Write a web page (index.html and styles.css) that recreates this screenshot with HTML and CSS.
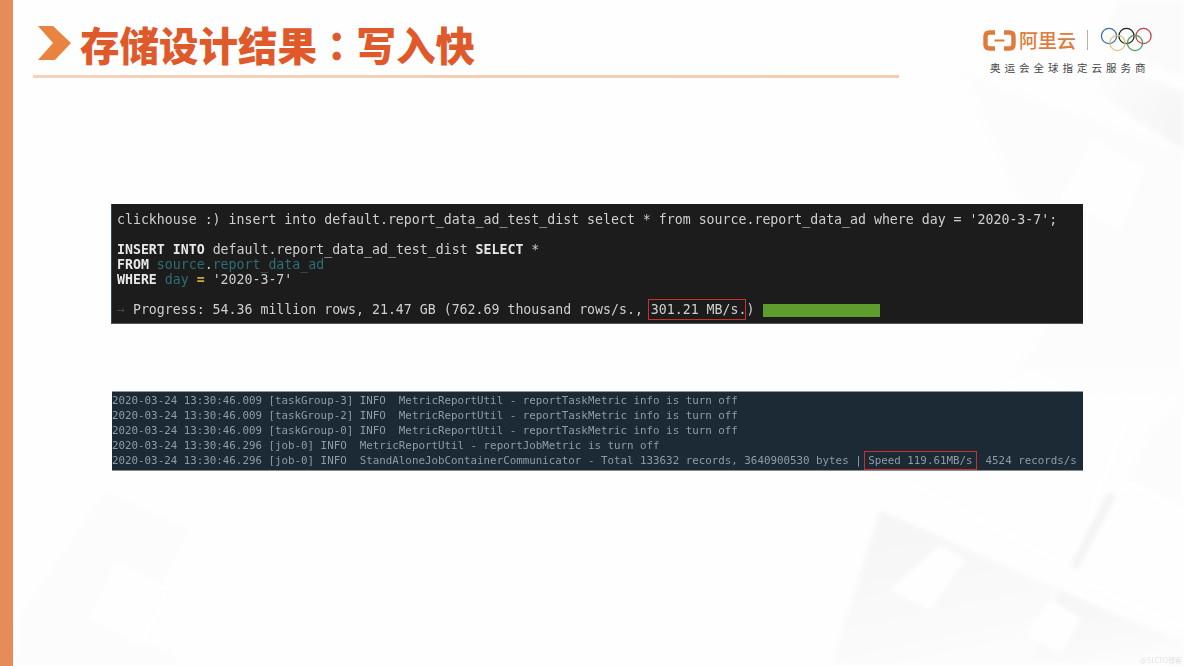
FILE: index.html
```html
<!DOCTYPE html>
<html lang="zh-CN">
<head>
<meta charset="utf-8">
<title>存储设计结果：写入快</title>
<link rel="stylesheet" href="styles.css">
</head>
<body>
<div class="slide">
  <svg class="backdrop" viewBox="0 0 1184 666" aria-hidden="true">
    <defs>
      <linearGradient id="fadeA" x1="0" y1="0" x2="0.3" y2="1"><stop offset="0" stop-color="#efefef"/><stop offset="1" stop-color="#fbfbfb"/></linearGradient>
      <linearGradient id="fadeB" x1="0" y1="0" x2="1" y2="0.6"><stop offset="0" stop-color="#ffffff"/><stop offset="1" stop-color="#f1f1f1"/></linearGradient>
      <linearGradient id="fadeC" x1="0" y1="0" x2="0" y2="1"><stop offset="0" stop-color="#fbfbfb"/><stop offset="1" stop-color="#fdfdfd"/></linearGradient>
    </defs>
    <polygon class="tone-soft" points="1120,0 1184,0 1184,80 1100,38"/>
    <polygon points="1110,62 1184,92 1184,150 1090,90" fill="url(#fadeB)"/>
    <polygon class="tone-faint" points="960,70 1184,150 1184,330 1100,330 1030,230"/>
    <polygon points="1121,195 1184,228 1184,400 1000,390 1060,300" fill="url(#fadeC)"/>
    <polygon class="tone-white" points="1094,140 1144,170 1121,230 1061,197"/>
    <polygon points="880,510 1060,590 1025,666 830,666" fill="url(#fadeA)"/>
    <polygon points="1060,590 1130,620 1184,640 1184,666 1025,666" fill="url(#fadeA)"/>
    <polygon class="tone-white" points="1030,370 1130,420 1070,570 880,470"/>
    <polygon class="tone-faint" points="1184,400 1184,510 1127,480 1150,430"/>
    <polygon class="tone-white" points="1127,480 1184,510 1184,632 1074,580"/>
    <polygon class="tone-line" points="1107,493 1117,495 1078,570 1070,566"/>
    <polygon class="tone-white" points="1051,600 1081,618 1061,655 1026,635"/>
    <polygon class="tone-white" points="940,545 965,560 930,610 890,590"/>
    <polygon class="tone-pale" points="105,490 190,530 130,650 20,615"/>
    <polygon class="tone-white" points="115,560 170,590 145,645 90,620"/>
    <polygon class="tone-pale" points="20,615 170,650 180,666 14,666"/>
  </svg>

  <aside class="rail"></aside>

  <main class="content">
    <header class="head">
      <div class="title-block">
        <div class="title-row">
          <svg class="chevron" viewBox="0 0 33 34" aria-hidden="true">
            <polygon points="0,0 15,0 33,17 17,34 0,34 15,17" fill="#E8843F"/>
          </svg>
          <h1 class="title">存储设计结果<span class="colon" lang="zh-TW">：</span>写入快</h1>
        </div>
        <div class="rule"></div>
      </div>
      <div class="brand">
        <div class="brand-row">
          <svg class="cloud-mark" viewBox="0 0 33 21" aria-hidden="true">
            <path d="M12 2.5H6.5Q2.5 2.5 2.5 6.5V14.5Q2.5 18.5 6.5 18.5H12" fill="none" stroke="#E07A3A" stroke-width="4.4"/>
            <path d="M21 2.5H26.5Q30.5 2.5 30.5 6.5V14.5Q30.5 18.5 26.5 18.5H21" fill="none" stroke="#E07A3A" stroke-width="4.4"/>
            <rect x="11.5" y="9.5" width="10" height="2" fill="#E07A3A"/>
          </svg>
          <span class="brand-name">阿里云</span>
          <span class="brand-sep"></span>
          <svg class="rings" viewBox="0 0 52 26" aria-hidden="true">
            <circle cx="9" cy="9" r="7.6" stroke="#3E6FB0"/>
            <circle cx="26.5" cy="9" r="7.6" stroke="#222222"/>
            <circle cx="43.5" cy="9" r="7.6" stroke="#C8404A"/>
            <circle cx="17.5" cy="16" r="7.6" stroke="#E0C27A"/>
            <circle cx="35" cy="16" r="7.6" stroke="#4E9A63"/>
          </svg>
        </div>
        <div class="brand-sub">奥运会全球指定云服务商</div>
      </div>
    </header>

    <section class="term term-dark">
      <pre class="term-text"><span class="plain">clickhouse :) insert into default.report_data_ad_test_dist select * from source.report_data_ad where day = '2020-3-7';</span>

<b class="kw">INSERT INTO</b> <span class="plain">default.report_data_ad_test_dist</span> <b class="kw">SELECT</b> <span class="plain">*</span>
<b class="kw">FROM</b> <span class="id">source</span><span class="plain">.</span><span class="id">report_data_ad</span>
<b class="kw">WHERE</b> <span class="id">day</span> <b class="op">=</b> <span class="plain">'2020-3-7'</span>

<span class="arrow">→</span> <span class="plain">Progress: 54.36 million rows, 21.47 GB (762.69 thousand rows/s., <span class="mark mark-a">301.21 MB/s.</span>) </span><span class="progress"></span></pre>
    </section>

    <section class="term term-navy">
      <pre class="log-text">2020-03-24 13:30:46.009 [taskGroup-3] INFO  MetricReportUtil - reportTaskMetric info is turn off
2020-03-24 13:30:46.009 [taskGroup-2] INFO  MetricReportUtil - reportTaskMetric info is turn off
2020-03-24 13:30:46.009 [taskGroup-0] INFO  MetricReportUtil - reportTaskMetric info is turn off
2020-03-24 13:30:46.296 [job-0] INFO  MetricReportUtil - reportJobMetric is turn off
2020-03-24 13:30:46.296 [job-0] INFO  StandAloneJobContainerCommunicator - Total 133632 records, 3640900530 bytes | <span class="mark mark-b">Speed 119.61MB/s</span>  4524 records/s</pre>
    </section>
  </main>

  <div class="watermark">@51CTO博客</div>
</div>
</body>
</html>
```

FILE: styles.css
```css
* { box-sizing: border-box; }
html, body { margin: 0; padding: 0; background: #fff; }
body { width: 1184px; height: 666px; overflow: hidden; }

.slide {
  position: relative;
  width: 1184px;
  height: 666px;
  display: flex;
  overflow: hidden;
  background: #fefefe;
}
.backdrop { position: absolute; inset: 0; width: 1184px; height: 666px; filter: blur(2px); opacity: 0.6; }
.tone-white { fill: #ffffff; }
.tone-soft { fill: #fafafa; }
.tone-faint { fill: #fcfcfc; }
.tone-pale { fill: #fbfbfb; }
.tone-line { fill: #eeeeee; }

.rail { position: relative; flex: 0 0 13px; background: #E68C58; }

.content { position: relative; flex: 1; padding-left: 20px; display: flex; flex-direction: column; }

.head { display: flex; height: 78px; padding-top: 23px; }
.title-block { flex: 0 0 866px; display: flex; flex-direction: column; }
.title-row { display: flex; align-items: center; height: 52px; padding-left: 5px; }
.chevron { width: 33px; height: 34px; flex: none; margin-top: -12px; }
.title {
  margin: -10px 0 0 9px;
  font: 900 39.5px/46px "Noto Sans CJK SC", sans-serif;
  color: #E0592B;
  white-space: nowrap;
}
.colon { font-family: "Noto Sans CJK TC", sans-serif; }
.rule {
  height: 3px;
  background: linear-gradient(90deg, #F4D3BA, #F2CDB0);
}

.brand { margin-left: 84px; margin-top: 5px; width: 170px; }
.brand-row { display: flex; align-items: center; height: 24px; }
.cloud-mark { width: 33px; height: 21px; flex: none; }
.brand-name {
  margin-left: 3px;
  font: 500 19px/24px "Noto Sans CJK SC", sans-serif;
  color: #DF7B3B;
  white-space: nowrap;
}
.brand-sep { width: 1px; height: 20px; margin-left: 11px; background: #B8AFA6; flex: none; }
.rings { width: 52px; height: 26px; margin-left: 12px; flex: none; fill: none; stroke-width: 1.3; }
.brand-sub {
  margin: 9px 0 0 7px;
  font: 400 10.5px/14px "Noto Sans CJK SC", sans-serif;
  letter-spacing: 4px;
  color: #444;
  white-space: nowrap;
}

.term { margin-left: 78px; width: 972px; }
.term-dark {
  margin-top: 126px;
  height: 120px;
  padding: 8px 0 7px 5px;
  background: #1C1C1C;
  border-left: 1px solid #2A4A66;
  border-bottom: 1px solid #555;
}
.term-navy {
  margin-top: 67px;
  margin-left: 79px;
  width: 971px;
  height: 80px;
  padding-top: 1px;
  background: #1B2A35;
  border-top: 1px solid #8a98a2;
  border-bottom: 1px solid #7f8e98;
}

.term-text, .log-text { margin: 0; font-family: "DejaVu Sans Mono", monospace; white-space: pre; filter: blur(0.35px); }
.term-text { font-size: 13.24px; line-height: 15px; }
.log-text { font-size: 10.84px; line-height: 15px; color: #8F9CA4; }

.plain { color: #CFCFCF; }
.kw { color: #E8E8E8; font-weight: 700; }
.id { color: #2D6F73; }
.op { color: #C9A93E; font-weight: 700; }
.arrow { color: #3C4A48; }

.progress {
  display: inline-block;
  width: 117px;
  height: 13px;
  margin-left: 1px;
  vertical-align: -3px;
  background: #5E9C2E;
}

.mark { position: relative; }
.mark::after { content: ""; position: absolute; border: 1px solid #C8322A; }
.mark-a::after { left: -3px; right: 0; top: -3px; bottom: -3px; }
.mark-b::after { left: -4px; right: -4px; top: -3px; bottom: -3px; }

.watermark {
  position: absolute;
  right: 2px;
  bottom: 1px;
  font: 400 7px/9px "Noto Sans CJK SC", sans-serif;
  color: #e2e2e2;
  filter: blur(0.5px);
}
```
